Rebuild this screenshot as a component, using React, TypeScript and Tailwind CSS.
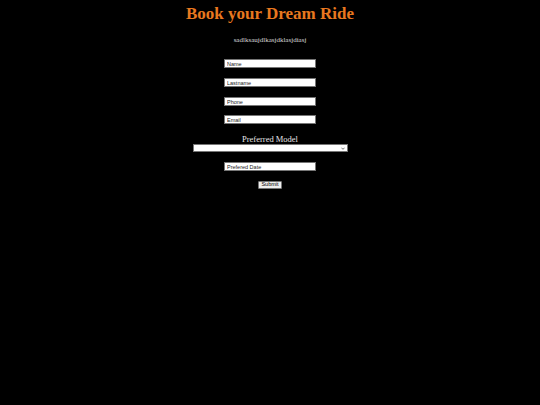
const fieldClass =
  "block mx-auto w-[92px] h-[9px] bg-white border border-[#767676] px-[2px] text-[5.5px] leading-none text-black placeholder:text-[#222] outline-none";

function Field({ placeholder }: { placeholder: string }) {
  return <input type="text" placeholder={placeholder} className={fieldClass} />;
}

export default function App() {
  return (
    <div className="min-h-[405px] w-[540px] bg-black font-['Liberation_Serif',serif]">
      <div className="flex flex-col items-center">
        {/* Header */}
        <h1 className="mt-[2px] text-[17px] leading-[23px] font-bold text-[#e8781f]">
          Book your Dream Ride
        </h1>
        <p className="mt-[10px] text-[7px] leading-[10px] text-[#dcdcdc]">
          sadlksaujdlkasjdklasjdiasj
        </p>

        {/* Form */}
        <form className="mt-[14px] flex flex-col items-center font-['Liberation_Sans',sans-serif]">
          <Field placeholder="Name" />
          <div className="mt-[10px]">
            <Field placeholder="Lastname" />
          </div>
          <div className="mt-[10px]">
            <Field placeholder="Phone" />
          </div>
          <div className="mt-[9px]">
            <Field placeholder="Email" />
          </div>

          <label className="mt-[10px] font-['Liberation_Serif',serif] text-[8.5px] leading-[10px] text-[#e6e6e6]">
            Preferred Model
          </label>
          <div className="relative w-[155px] h-[8px] bg-white border border-[#767676]">
            <svg
              viewBox="0 0 10 6"
              className="absolute right-[2px] top-[1.5px] w-[4px] h-[3px]"
              fill="none"
              stroke="#222"
              strokeWidth="1.6"
            >
              <path d="M1 1l4 4 4-4" />
            </svg>
          </div>

          <div className="mt-[10px]">
            <Field placeholder="Prefered Date" />
          </div>

          <button
            type="button"
            className="mt-[10px] w-[24px] h-[8px] bg-[#efefef] border border-[#767676] rounded-[1px] text-[5.5px] leading-none text-black"
          >
            Submit
          </button>
        </form>
      </div>
    </div>
  );
}
